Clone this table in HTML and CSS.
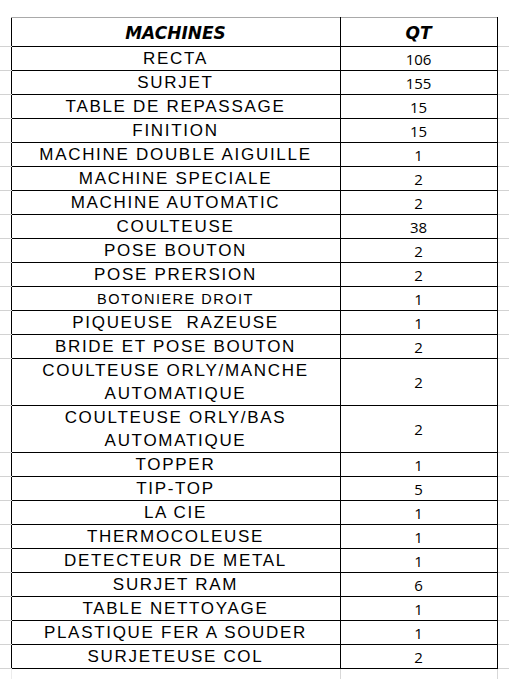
FILE: index.html
```html
<!DOCTYPE html>
<html lang="fr">
<head>
<meta charset="utf-8">
<title>Machines</title>
<link rel="stylesheet" href="styles.css">
</head>
<body>
<table class="sheet">
  <colgroup>
    <col class="c-stub-l">
    <col class="c-name">
    <col class="c-qt">
    <col class="c-stub-r">
  </colgroup>
  <thead>
    <tr class="head">
      <td class="stub"></td>
      <th class="name">MACHINES</th>
      <th class="qt">QT</th>
      <td class="stub"></td>
    </tr>
  </thead>
  <tbody>
    <tr><td class="stub"></td><td class="name">RECTA</td><td class="qt">106</td><td class="stub"></td></tr>
    <tr><td class="stub"></td><td class="name">SURJET</td><td class="qt">155</td><td class="stub"></td></tr>
    <tr><td class="stub"></td><td class="name">TABLE DE REPASSAGE</td><td class="qt">15</td><td class="stub"></td></tr>
    <tr><td class="stub"></td><td class="name">FINITION</td><td class="qt">15</td><td class="stub"></td></tr>
    <tr><td class="stub"></td><td class="name">MACHINE DOUBLE AIGUILLE</td><td class="qt">1</td><td class="stub"></td></tr>
    <tr><td class="stub"></td><td class="name">MACHINE SPECIALE</td><td class="qt">2</td><td class="stub"></td></tr>
    <tr><td class="stub"></td><td class="name">MACHINE AUTOMATIC</td><td class="qt">2</td><td class="stub"></td></tr>
    <tr><td class="stub"></td><td class="name">COULTEUSE</td><td class="qt">38</td><td class="stub"></td></tr>
    <tr><td class="stub"></td><td class="name">POSE BOUTON</td><td class="qt">2</td><td class="stub"></td></tr>
    <tr><td class="stub"></td><td class="name">POSE PRERSION</td><td class="qt">2</td><td class="stub"></td></tr>
    <tr><td class="stub"></td><td class="name small">BOTONIERE DROIT</td><td class="qt">1</td><td class="stub"></td></tr>
    <tr><td class="stub"></td><td class="name">PIQUEUSE&nbsp; RAZEUSE</td><td class="qt">1</td><td class="stub"></td></tr>
    <tr><td class="stub"></td><td class="name">BRIDE ET POSE BOUTON</td><td class="qt">2</td><td class="stub"></td></tr>
    <tr class="double"><td class="stub"></td><td class="name">COULTEUSE ORLY/MANCHE<br>AUTOMATIQUE</td><td class="qt">2</td><td class="stub"></td></tr>
    <tr class="double"><td class="stub"></td><td class="name">COULTEUSE ORLY/BAS<br>AUTOMATIQUE</td><td class="qt">2</td><td class="stub"></td></tr>
    <tr><td class="stub"></td><td class="name">TOPPER</td><td class="qt">1</td><td class="stub"></td></tr>
    <tr><td class="stub"></td><td class="name">TIP-TOP</td><td class="qt">5</td><td class="stub"></td></tr>
    <tr><td class="stub"></td><td class="name">LA CIE</td><td class="qt">1</td><td class="stub"></td></tr>
    <tr><td class="stub"></td><td class="name">THERMOCOLEUSE</td><td class="qt">1</td><td class="stub"></td></tr>
    <tr><td class="stub"></td><td class="name">DETECTEUR DE METAL</td><td class="qt">1</td><td class="stub"></td></tr>
    <tr><td class="stub"></td><td class="name">SURJET RAM</td><td class="qt">6</td><td class="stub"></td></tr>
    <tr><td class="stub"></td><td class="name">TABLE NETTOYAGE</td><td class="qt">1</td><td class="stub"></td></tr>
    <tr><td class="stub"></td><td class="name">PLASTIQUE FER A SOUDER</td><td class="qt">1</td><td class="stub"></td></tr>
    <tr><td class="stub"></td><td class="name">SURJETEUSE COL</td><td class="qt">2</td><td class="stub"></td></tr>
    <tr class="tail"><td class="stub"></td><td class="tail-name"></td><td class="tail-qt"></td><td class="stub"></td></tr>
  </tbody>
</table>
</body>
</html>
```

FILE: styles.css
```css
html, body {
  margin: 0;
  padding: 0;
  background: #ffffff;
}

body {
  padding-top: 17px;
}

.sheet {
  border-collapse: collapse;
  table-layout: fixed;
  width: 509px;
  color: #000;
}

.c-stub-l { width: 11px; }
.c-name { width: 329px; }
.c-qt { width: 157px; }
.c-stub-r { width: 12px; }

.sheet td,
.sheet th {
  padding: 0;
  text-align: center;
  vertical-align: bottom;
  white-space: nowrap;
}

.sheet .stub {
  border-bottom: 1px solid #d2d2d2;
}

.sheet .name,
.sheet .qt {
  border: 1px solid #000;
}

.sheet .name {
  font-family: "Liberation Sans", Arial, sans-serif;
  font-size: 17px;
  letter-spacing: 1.7px;
  line-height: 20px;
  padding: 2px 0 1px;
}

.sheet .name.small {
  font-size: 14.5px;
  letter-spacing: 1.5px;
}

.sheet .qt {
  font-family: "Open Sans", "Liberation Sans", sans-serif;
  font-size: 15px;
  line-height: 20px;
  padding: 2px 0 1px;
}

.head .name,
.head .qt {
  font-family: "DejaVu Sans", Verdana, sans-serif;
  font-weight: bold;
  font-style: italic;
  font-size: 17px;
  letter-spacing: 0;
  line-height: 20px;
  padding: 5px 0 3px;
  border-top: 1px solid #a9a9a9;
}

.double .name {
  line-height: 23px;
  padding: 0;
}

.double .qt {
  vertical-align: middle;
  padding: 0;
}

.tail td {
  height: 10px;
  padding: 0;
}

.tail .stub {
  border-bottom: none;
}

.tail .tail-name {
  border-left: 1px solid #ececec;
  border-right: 1px solid #d8d8d8;
}

.tail .tail-qt {
  border-right: 1px solid #d8d8d8;
}
```
